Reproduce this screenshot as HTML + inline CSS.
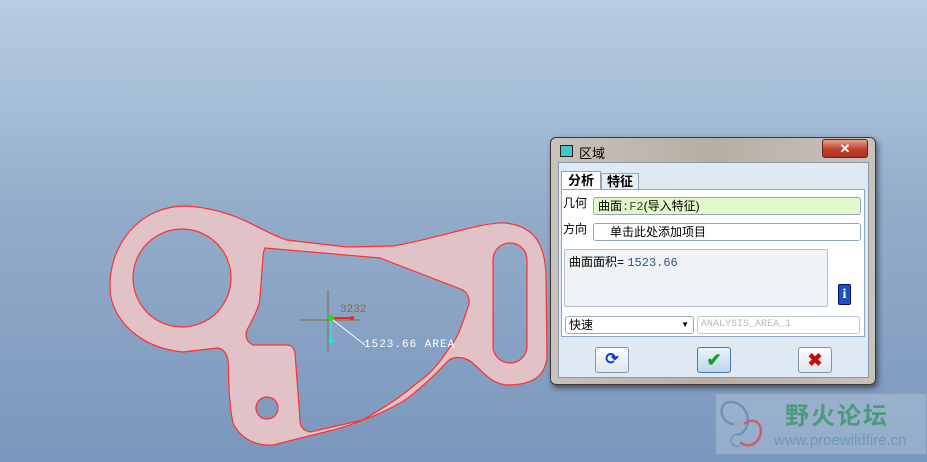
<!DOCTYPE html>
<html><head><meta charset="utf-8"><style>
body{margin:0;width:927px;height:462px;overflow:hidden;background:linear-gradient(#b7cde3 0%,#93acc9 45%,#7a97bd 100%);position:relative;font-family:"Liberation Sans","Noto Sans CJK SC",sans-serif;}
.abs{position:absolute}
.dlg{left:550px;top:137px;width:324px;height:246px;border:1px solid #3a3a3a;border-radius:6px;background:linear-gradient(90deg,#c9c2bb,#b8ada3 50%,#c9c2bb);box-shadow:2px 3px 6px rgba(0,0,0,.5)}
.body{left:7px;top:24px;width:309px;height:214px;background:#dfe9f3;border:1px solid #8a9aab}
.fld{background:#fff;border:1px solid #8ea6c0;border-radius:3px;font-size:12px;height:16px;line-height:16px}
.btn{width:32px;height:24px;border:1px solid #7f93a9;border-radius:3px;background:linear-gradient(#fbfcfd,#dfe6ee)}
</style></head><body>
<svg class="abs" style="left:0;top:0" width="927" height="462">
<path d="M187,206 C240,210 260,232 287,240 L347,247 L393,246 C440,238 480,222 505,223 C535,226 545,245 546,275 L547,357 C545,378 530,385 507,385 C492,384 483,372 475,365 C465,355 452,356 447,362 C430,380 410,398 400,403 C370,420 340,428 333,430 L273,445 C255,446 240,438 233,423 C228,400 229,370 228,360 C226,350 220,348 217,348 L183,352 C140,348 112,320 110,290 C108,245 140,205 187,206 Z M182,278 m-49,0 a49,49 0 1,0 98,0 a49,49 0 1,0 -98,0 Z M265,248 L380,258 L463,290 C470,295 470,303 468,307 C462,325 458,338 450,347 C440,362 430,375 417,383 C400,398 380,410 363,420 L310,432 C302,430 300,426 300,420 L295,353 C294,348 292,345 287,345 L253,345 C246,342 245,335 247,330 C255,315 260,305 260,297 L263,257 C263,251 265,249 265,248 Z M510,243 a17,17 0 0,0 -17,17 L493,346 a17,17 0 0,0 34,0 L527,260 a17,17 0 0,0 -17,-17 Z M267,408 m-11,0 a11,11 0 1,0 22,0 a11,11 0 1,0 -22,0 Z" fill="#e1c3c7" stroke="#ff3030" stroke-width="1.2" fill-rule="evenodd"/>
<g stroke="#8a6a3a" stroke-width="1"><line x1="328" y1="290" x2="328" y2="352"/><line x1="300" y1="320" x2="360" y2="320"/></g>
<line x1="331" y1="318" x2="352" y2="318" stroke="#ff2020" stroke-width="2"/><circle cx="352" cy="318" r="2" fill="#ff2020"/>
<line x1="331" y1="319" x2="331" y2="341" stroke="#20e0f0" stroke-width="1.5"/><circle cx="331" cy="341" r="2.5" fill="#20e0f0"/>
<circle cx="331" cy="318" r="3" fill="#20e020"/>
<line x1="333" y1="320" x2="365" y2="345" stroke="#fff" stroke-width="1"/>
<text x="340" y="312" font-family="Liberation Mono,monospace" font-size="11" fill="#8a6a3a">3232</text>
<text x="364" y="347" font-family="Liberation Mono,monospace" font-size="11" fill="#fff" letter-spacing="1">1523.66 AREA</text>
</svg>
<div class="abs" style="left:716px;top:394px;width:210px;height:60px;background:rgba(200,215,230,.35)"></div>
<div class="abs" style="left:785px;top:396px;font-size:24px;font-weight:bold;color:#4e9a7e;letter-spacing:2px">野火论坛</div>
<div class="abs" style="left:774px;top:432px;font-size:15px;color:#6c9ab0">www.proewildfire.cn</div>
<svg class="abs" style="left:718px;top:398px" width="50" height="54"><path d="M6,6 C16,0 30,8 30,24 C28,34 22,38 18,36" stroke="#6d8fb8" stroke-width="2.5" fill="none"/><path d="M6,6 C0,14 6,26 16,26" stroke="#6d8fb8" stroke-width="2.5" fill="none"/><path d="M26,26 C36,18 46,26 42,38 C38,48 28,50 22,44" stroke="#c86070" stroke-width="2.5" fill="none"/><path d="M18,36 C10,40 12,50 22,48" stroke="#7a9ac0" stroke-width="2" fill="none"/></svg>
<div class="abs dlg">
 <div class="abs" style="left:9px;top:7px;width:11px;height:10px;background:#40c8c8;border:1px solid #222"></div>
 <div class="abs" style="left:28px;top:5px;font-size:13px;color:#000">区域</div>
 <div class="abs" style="left:271px;top:1px;width:44px;height:17px;border:1px solid #6a2020;border-radius:3px;background:linear-gradient(#e7a090,#c0412c 55%,#b03020);color:#fff;text-align:center;font-weight:bold;font-size:13px;line-height:17px">✕</div>
 <div class="abs body">
  <div class="abs" style="left:2px;top:8px;width:38px;height:18px;background:#fff;border:1px solid #8ea6c0;border-bottom:none;font-size:13px;font-weight:bold;text-align:center;line-height:18px">分析</div>
  <div class="abs" style="left:42px;top:10px;width:36px;height:16px;background:#e8eef5;border:1px solid #8ea6c0;font-size:13px;font-weight:bold;text-align:center;line-height:16px">特征</div>
  <div class="abs" style="left:2px;top:26px;width:302px;height:146px;background:#fff;border:1px solid #8ea6c0">
   <div class="abs" style="left:1px;top:4px;font-size:12px">几何</div>
   <div class="abs fld" style="left:31px;top:7px;width:262px;background:#e3f7c9;padding-left:4px">曲面<span style="font-family:Liberation Mono,monospace;color:#444">:F2</span>(导入特征)</div>
   <div class="abs" style="left:1px;top:30px;font-size:12px">方向</div>
   <div class="abs fld" style="left:31px;top:33px;width:250px;padding-left:16px">单击此处添加项目</div>
   <div class="abs" style="left:2px;top:59px;width:264px;height:58px;background:#f0f3f5;border:1px solid #a9bccf;border-radius:2px;font-size:12px;padding:3px 0 0 4px;box-sizing:border-box">曲面面积= <span style="font-family:Liberation Mono,monospace;color:#305880">1523.66</span></div>
   <div class="abs" style="left:276px;top:94px;width:11px;height:19px;background:#2050c0;border:1px solid #001060;border-radius:2px;color:#fff;font-weight:bold;font-size:14px;text-align:center;line-height:19px;font-family:Liberation Serif,serif">i</div>
   <div class="abs fld" style="left:3px;top:126px;width:124px;border-color:#9aa9b8;padding-left:3px">快速<span style="position:absolute;right:4px;font-size:8px">▼</span></div>
   <div class="abs fld" style="left:135px;top:126px;width:158px;border-color:#c0c8d0;padding-left:3px;color:#b8b8b8;font-family:Liberation Mono,monospace;font-size:10px">ANALYSIS_AREA_1</div>
  </div>
  <div class="abs btn" style="left:36px;top:184px;color:#1040d0;text-align:center;font-size:16px;line-height:24px;font-weight:bold">⟳</div>
  <div class="abs btn" style="left:138px;top:184px;background:linear-gradient(#eaf4fb,#bcd6ea);border-color:#4a7aa8;color:#10a020;text-align:center;font-size:18px;line-height:24px;font-weight:bold">✔</div>
  <div class="abs btn" style="left:239px;top:184px;color:#c01010;text-align:center;font-size:18px;line-height:24px;font-weight:bold">✖</div>
 </div>
</div>
</body></html>
